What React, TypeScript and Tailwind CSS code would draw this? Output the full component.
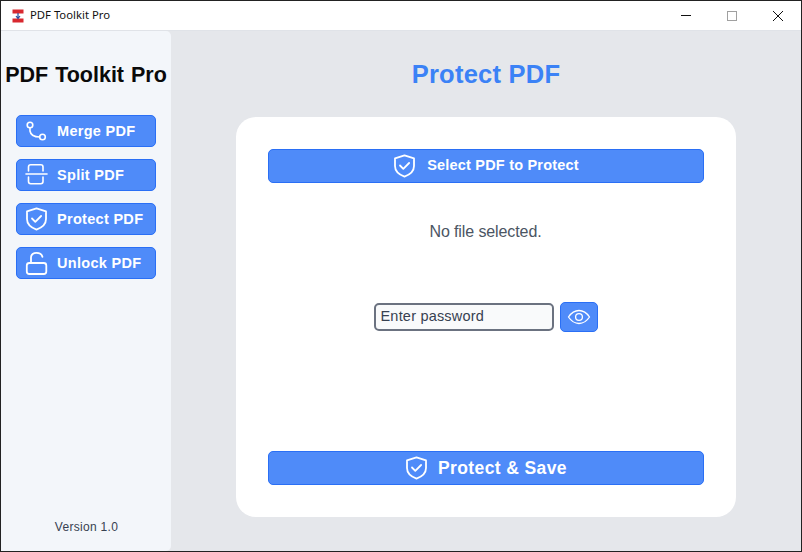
import React from "react";

const F = "[font-family:'Liberation_Sans',Arial,sans-serif]";

function Shield({ size = 24 }: { size?: number }) {
  return (
    <svg width={size} height={size} viewBox="0 0 24 24" fill="none" stroke="white" strokeWidth="1.8" strokeLinecap="round" strokeLinejoin="round" className="shrink-0">
      <path d="M11.5 1.4 L21 4.4 V12 C21 17 17 20.6 11.5 22.6 C6 20.6 2 17 2 12 V4.4 Z" />
      <path d="M7 11.5 L10.3 14.8 L16.1 9" />
    </svg>
  );
}

function Merge() {
  return (
    <svg width="24" height="24" viewBox="0 0 24 24" fill="none" stroke="white" strokeWidth="1.6" className="shrink-0">
      <circle cx="5" cy="6" r="2.8" />
      <circle cx="17.5" cy="18" r="2.8" />
      <path d="M5 9 V12 C5.5 15 8.5 18 14.7 18" />
    </svg>
  );
}

function Split() {
  return (
    <svg width="24" height="24" viewBox="0 0 24 24" fill="none" stroke="white" strokeWidth="1.6" strokeLinecap="round" className="shrink-0">
      <path d="M3.5 8 V4 Q3.5 1.8 5.7 1.8 H15.8 Q18 1.8 18 4 V8" />
      <path d="M3.5 14 V18.5 Q3.5 20.7 5.7 20.7 H15.8 Q18 20.7 18 18.5 V14" />
      <path d="M1 11 H22" />
    </svg>
  );
}

function Unlock() {
  return (
    <svg width="24" height="24" viewBox="0 0 24 24" fill="none" stroke="white" strokeWidth="1.8" strokeLinecap="round" className="shrink-0">
      <rect x="1.8" y="12" width="19.5" height="11" rx="2.5" />
      <path d="M6 12 V6.5 C6 3.5 8.5 1.8 11.5 1.8 C14.5 1.8 16.8 3.3 17.4 5.8" />
    </svg>
  );
}

function Eye() {
  return (
    <svg width="24" height="24" viewBox="0 0 24 24" fill="none" stroke="white" strokeWidth="1.3">
      <path d="M1.5 12 C4.5 7.5 8 5.5 12 5.5 C16 5.5 19.5 7.5 22.5 12 C19.5 16.5 16 18.5 12 18.5 C8 18.5 4.5 16.5 1.5 12 Z" />
      <circle cx="12" cy="12" r="3.4" />
    </svg>
  );
}

function NavButton({ icon, label }: { icon: React.ReactNode; label: string }) {
  return (
    <button className="w-[140px] h-8 flex items-center pl-[8px] bg-[#4f8bf9] border border-[#2a6ff5] rounded-[5px] text-white font-bold text-[14.5px] tracking-[0.3px]">
      {icon}
      <span className="ml-[8px] pt-[1px]">{label}</span>
    </button>
  );
}

function WideButton({ label, big }: { label: string; big?: boolean }) {
  return (
    <button className={`w-full h-[34px] flex items-center justify-center bg-[#4f8bf9] border border-[#2a6ff5] rounded-[5px] text-white font-bold ${big ? "gap-[9px] pl-[1px] text-[17.5px] tracking-[0.38px]" : "gap-[10px] pl-[1px] text-[14.5px] tracking-[0.2px]"}`}>
      <Shield />
      <span>{label}</span>
    </button>
  );
}

export default function App() {
  return (
    <div className={`${F} w-[802px] h-[552px] flex flex-col border border-[#222222] bg-[#e5e7eb] overflow-hidden`}>
      <div className="h-[30px] shrink-0 bg-white flex items-center pl-[11px] border-b border-[#e0e3e8]">
        <svg width="12" height="14" viewBox="0 0 12 14" className="shrink-0">
          <rect x="0.5" y="0.5" width="11" height="4" fill="#d8282f" />
          <rect x="0.5" y="9.5" width="11" height="4" fill="#d8282f" />
          <path d="M6 4 V9 M4 7 L6 9.5 L8 7" stroke="#2b4a9b" strokeWidth="1.2" fill="none" />
        </svg>
        <span className="ml-[6px] text-[11.3px] text-[#111111] font-['Noto_Sans',sans-serif]">PDF Toolkit Pro</span>
        <div className="ml-auto flex items-center h-full">
          <svg width="12" height="12" viewBox="0 0 12 12" className="mr-[34px]"><path d="M1 5.5 H11" stroke="#111" strokeWidth="1" /></svg>
          <svg width="12" height="12" viewBox="0 0 12 12" className="mr-[34px]"><rect x="1.5" y="1.5" width="9" height="9" fill="none" stroke="#a0a0a0" strokeWidth="1" /></svg>
          <svg width="12" height="12" viewBox="0 0 12 12" className="mr-[17px]"><path d="M1 1 L11 11 M11 1 L1 11" stroke="#111" strokeWidth="1" /></svg>
        </div>
      </div>
      <div className="flex-1 flex min-h-0">
        <aside className="w-[170px] shrink-0 bg-[#f3f6fa] rounded-r-[5px] flex flex-col items-center">
          <div className="mt-[30px] h-7 leading-7 text-[21.5px] font-bold text-[#0a0a0a] whitespace-nowrap [word-spacing:1px]">PDF Toolkit Pro</div>
          <nav className="mt-[26px] flex flex-col gap-3">
            <NavButton icon={<Merge />} label="Merge PDF" />
            <NavButton icon={<Split />} label="Split PDF" />
            <NavButton icon={<Shield />} label="Protect PDF" />
            <NavButton icon={<Unlock />} label="Unlock PDF" />
          </nav>
          <div className="mt-auto mb-[15px] pl-[1px] text-[12px] tracking-[0.3px] text-[#374151]">Version 1.0</div>
        </aside>
        <main className="flex-1 flex flex-col items-center">
          <h1 className="mt-[27px] h-[32px] leading-[32px] text-[25.5px] font-bold text-[#3b82f6] tracking-[0.25px]">Protect PDF</h1>
          <section className="mt-[27px] w-[500px] h-[400px] ml-[-1px] bg-white rounded-[20px] px-8 pt-8 pb-8 flex flex-col items-center">
            <WideButton label="Select PDF to Protect" />
            <p className="mt-[39px] h-[20px] leading-[20px] text-[16px] text-[#4b5563] tracking-[-0.1px]">No file selected.</p>
            <div className="mt-[60px] flex items-center gap-[6px]">
              <div className="w-[180px] h-7 bg-[#f9fafb] border-2 border-[#6b7280] rounded-[5px] flex items-center pl-[5px] text-[14.5px] text-[#374151] tracking-[0.2px]">Enter password</div>
              <button className="w-[38px] h-[30px] bg-[#4f8bf9] border border-[#2a6ff5] rounded-[5px] flex items-center justify-center"><Eye /></button>
            </div>
            <div className="mt-auto w-full"><WideButton label="Protect & Save" big /></div>
          </section>
        </main>
      </div>
    </div>
  );
}
